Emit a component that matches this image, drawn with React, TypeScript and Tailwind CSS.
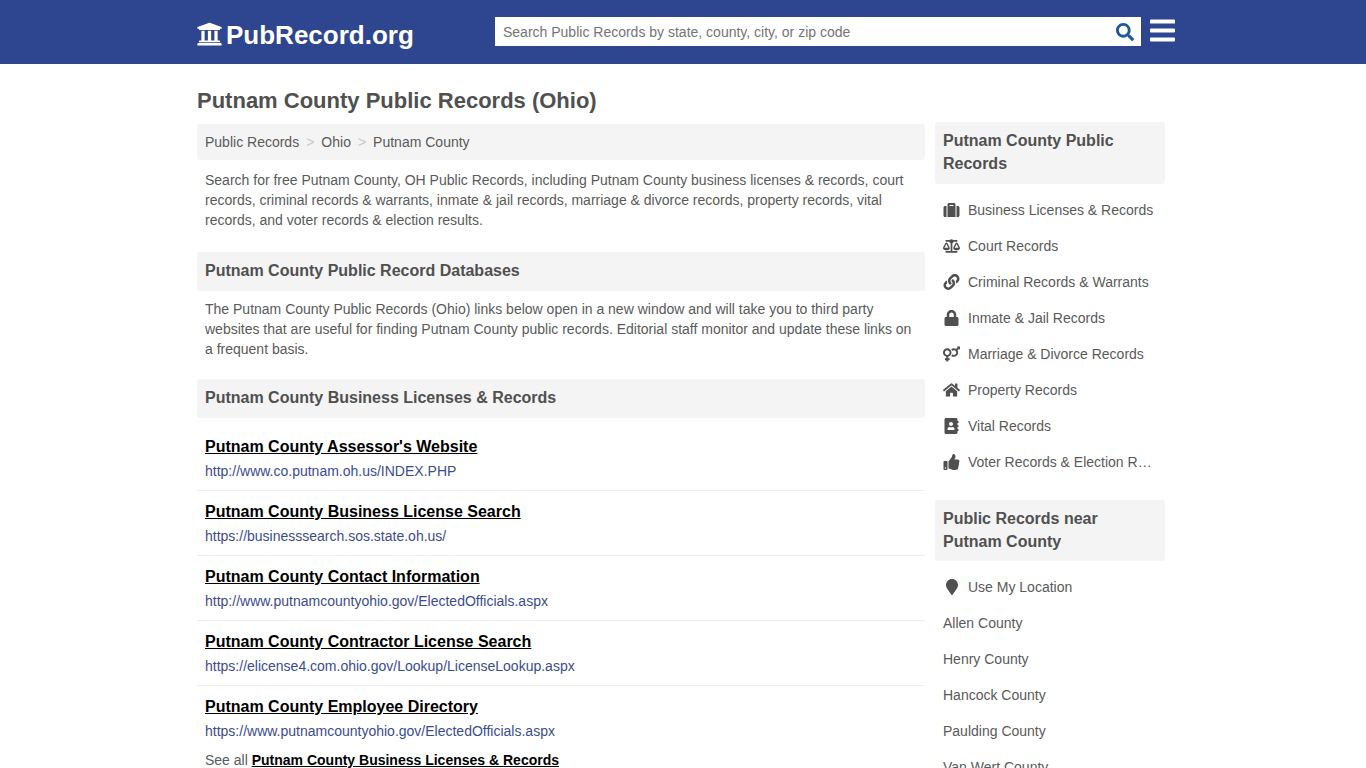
import React from "react";
import { FaUniversity, FaSearch, FaBars, FaSuitcase, FaBalanceScale, FaLink, FaLock, FaVenusMars, FaHome, FaAddressBook, FaThumbsUp, FaMapMarker } from "react-icons/fa";

const links = [
  ["Putnam County Assessor's Website", "http://www.co.putnam.oh.us/INDEX.PHP"],
  ["Putnam County Business License Search", "https://businesssearch.sos.state.oh.us/"],
  ["Putnam County Contact Information", "http://www.putnamcountyohio.gov/ElectedOfficials.aspx"],
  ["Putnam County Contractor License Search", "https://elicense4.com.ohio.gov/Lookup/LicenseLookup.aspx"],
  ["Putnam County Employee Directory", "https://www.putnamcountyohio.gov/ElectedOfficials.aspx"],
];

const side = [
  [FaSuitcase, "Business Licenses & Records"],
  [FaBalanceScale, "Court Records"],
  [FaLink, "Criminal Records & Warrants"],
  [FaLock, "Inmate & Jail Records"],
  [FaVenusMars, "Marriage & Divorce Records"],
  [FaHome, "Property Records"],
  [FaAddressBook, "Vital Records"],
  [FaThumbsUp, "Voter Records & Election Results"],
] as const;

const near = ["Allen County", "Henry County", "Hancock County", "Paulding County", "Van Wert County"];

function SectionTitle({ children }: { children: React.ReactNode }) {
  return <h2 className="h-[39px] rounded-[3px] bg-[#f4f4f4] px-2 text-[16px] font-bold leading-[37px] text-[#505050]">{children}</h2>;
}

export default function App() {
  return (
    <div className="h-screen overflow-hidden bg-white font-['Liberation_Sans',Arial,sans-serif] text-[14px] text-[#5a5a5a]">
      <header className="h-16 bg-[#2e4690]">
        <div className="mx-auto flex h-16 w-[992px] items-start pl-[9px]">
          <a className="mt-[15px] flex w-[299px] items-center text-white">
            <FaUniversity className="mr-[3px] mt-[-3px] h-[26px] w-[27px]" />
            <span className="mt-[1px] text-[26px] font-bold leading-[39px]">PubRecord.org</span>
          </a>
          <div className="mt-[17px] flex h-[29px] w-[646px] items-center bg-white pl-[8px] pr-[7px]">
            <span className="flex-1 pt-[2px] text-[14px] text-[#757575]">Search Public Records by state, county, city, or zip code</span>
            <FaSearch className="h-[18px] w-[18px] text-[#1c5a9a]" />
          </div>
          <FaBars className="mt-[16px] ml-[9px] h-[29px] w-[25px] text-white" />
        </div>
      </header>

      <main className="mx-auto w-[992px] px-[10px]">
        <div className="flex items-start gap-[10px]">
          <div className="w-[728px] shrink-0">
            <h1 className="pt-[23px] pb-[10px] text-[22px] font-bold leading-[27px] text-[#505050]">Putnam County Public Records (Ohio)</h1>
            <nav className="flex h-[36px] items-center rounded-[3px] bg-[#f4f4f4] px-2">
              <span>Public Records</span>
              <span className="mx-[7px] text-[#c8c8c8]">&gt;</span>
              <span>Ohio</span>
              <span className="mx-[7px] text-[#c8c8c8]">&gt;</span>
              <span>Putnam County</span>
            </nav>
            <p className="px-2 pt-[10px] pb-[22px] leading-[20px]">
              Search for free Putnam County, OH Public Records, including Putnam County business licenses &amp; records, court records, criminal records &amp; warrants, inmate &amp; jail records, marriage &amp; divorce records, property records, vital records, and voter records &amp; election results.
            </p>
            <SectionTitle>Putnam County Public Record Databases</SectionTitle>
            <p className="px-2 pt-[8px] pb-[20px] leading-[20px]">
              The Putnam County Public Records (Ohio) links below open in a new window and will take you to third party websites that are useful for finding Putnam County public records. Editorial staff monitor and update these links on a frequent basis.
            </p>
            <SectionTitle>Putnam County Business Licenses &amp; Records</SectionTitle>
            <div className="mt-[8px]">
              {links.map(([title, url], i) => (
                <div key={title} className={`h-[65px] px-2 pt-[11px] ${i < 4 ? "border-b border-[#eeeeee]" : ""}`}>
                  <a className="block text-[16px] font-bold leading-[20px] text-black underline">{title}</a>
                  <a className="mt-[4px] block leading-[20px] text-[#3b4d8f]">{url}</a>
                </div>
              ))}
            </div>
            <p className="mt-[-1px] px-2 leading-[20px]">
              See all <a className="font-bold text-black underline">Putnam County Business Licenses &amp; Records</a>
            </p>
          </div>

          <aside className="mt-[58px] w-[230px] shrink-0">
            <h3 className="rounded-[3px] bg-[#f4f4f4] px-2 pt-[7px] pb-[9px] text-[16px] font-bold leading-[23px] text-[#505050]">Putnam County Public Records</h3>
            <ul className="mt-[8px] mb-[20px]">
              {side.map(([Icon, label]) => (
                <li key={label} className="flex h-[36px] items-center px-2">
                  <span className="mr-[8px] flex w-[17px] shrink-0 justify-center"><Icon className="h-[16px] w-[17px] text-[#505050]" /></span>
                  <span className="truncate">{label}</span>
                </li>
              ))}
            </ul>
            <h3 className="rounded-[3px] bg-[#f4f4f4] px-2 pt-[7px] pb-[8px] text-[16px] font-bold leading-[23px] text-[#505050]">Public Records near Putnam County</h3>
            <ul className="mt-[8px]">
              <li className="flex h-[36px] items-center px-2">
                <span className="mr-[8px] flex w-[17px] shrink-0 justify-center"><FaMapMarker className="h-[16px] w-[12px] text-[#505050]" /></span>
                <span>Use My Location</span>
              </li>
              {near.map((n) => (
                <li key={n} className="flex h-[36px] items-center px-2">{n}</li>
              ))}
            </ul>
          </aside>
        </div>
      </main>
    </div>
  );
}
